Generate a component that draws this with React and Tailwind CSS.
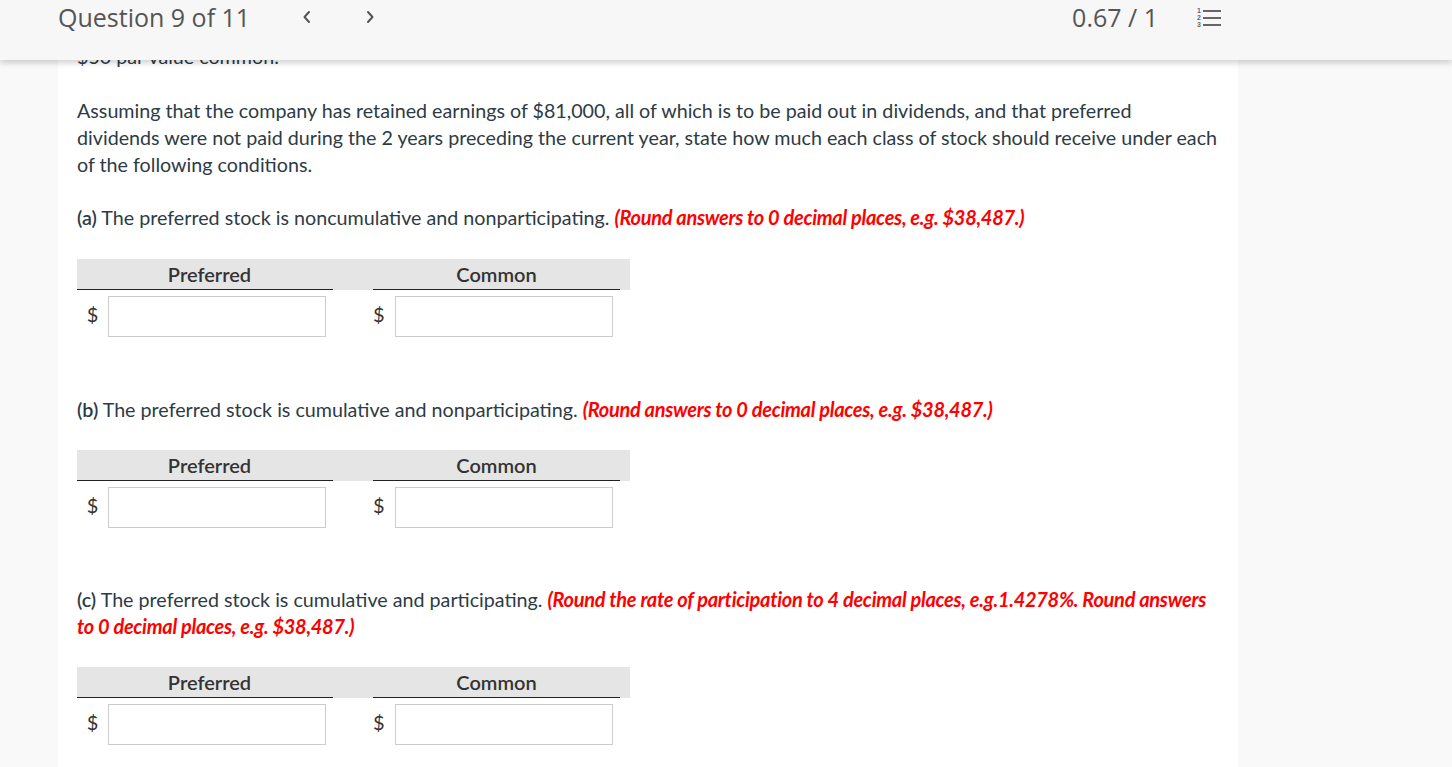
import React from 'react';

const Chevron = ({ dir }) => (
    <svg width="12" height="16" viewBox="0 0 12 16" fill="none">
        <path
            d={dir === 'left' ? 'M8 3 L3.5 8 L8 13' : 'M4 3 L8.5 8 L4 13'}
            stroke="#555"
            strokeWidth="2"
            strokeLinecap="round"
            strokeLinejoin="round"
        />
    </svg>
);

const ListIcon = () => (
    <svg width="26" height="22" viewBox="0 0 26 22">
        <text x="1" y="7" fontSize="7" fontWeight="bold" fill="#666" fontFamily="Liberation Sans, sans-serif">1</text>
        <text x="1" y="14" fontSize="7" fontWeight="bold" fill="#666" fontFamily="Liberation Sans, sans-serif">2</text>
        <text x="1" y="21" fontSize="7" fontWeight="bold" fill="#666" fontFamily="Liberation Sans, sans-serif">3</text>
        <rect x="7" y="4" width="18" height="2" fill="#666" />
        <rect x="7" y="11" width="18" height="2" fill="#666" />
        <rect x="7" y="18" width="18" height="2" fill="#666" />
    </svg>
);

const AnswerTable = () => (
    <div className="w-[553px]">
        <div className="bg-[#e5e5e5] h-[31px] flex">
            <div className="w-[256px] pl-[9px] flex items-center justify-center border-b border-[#222] font-semibold text-[#333] text-[20px]">
                Preferred
            </div>
            <div className="w-[40px]" />
            <div className="w-[247px] flex items-center justify-center border-b border-[#222] font-semibold text-[#333] text-[20px]">
                Common
            </div>
        </div>
        <div className="flex items-center mt-[6px]">
            <span className="w-[31px] mb-[5px] text-center text-[20px] text-[#333]">$</span>
            <input className="w-[218px] h-[41px] border border-[#ccc] bg-white" />
            <div className="w-[47px]" />
            <span className="w-[22px] mb-[5px] text-left text-[20px] text-[#333]">$</span>
            <input className="w-[218px] h-[41px] border border-[#ccc] bg-white" />
        </div>
    </div>
);

const Note = ({ children }) => (
    <span className="text-[#ff0000] text-[20px] font-bold italic tracking-[-0.015em]">{children}</span>
);

export default function App() {
    return (
        <div className="h-[767px] overflow-hidden bg-[#f9f9f9]" style={{ fontFamily: 'Lato, "Open Sans", sans-serif' }}>
            <div className="relative z-10 h-[60px] bg-[#f7f7f7] shadow-[0_3px_6px_rgba(0,0,0,0.18)] flex items-start" style={{ fontFamily: '"Open Sans", sans-serif' }}>
                <div className="pl-[58px] text-[25px] leading-[34px] text-[#555] w-[301px]">Question 9 of 11</div>
                <div className="pt-[9px]"><Chevron dir="left" /></div>
                <div className="pt-[9px] pl-[51px]"><Chevron dir="right" /></div>
                <div className="flex-1" />
                <div className="text-[25px] leading-[34px] text-[#555]">0.67 / 1</div>
                <div className="pt-[6px] pl-[38px] pr-[230px]"><ListIcon /></div>
            </div>
            <div className="ml-[58px] w-[1180px] bg-white -mt-[17px] pl-[19px] pr-[20px] text-[19.7px] text-[#2d3b45] leading-[27px]">
                <p>$50 par value common.</p>
                <p className="mt-[27px]">
                    Assuming that the company has retained earnings of $81,000, all of which is to be paid out in dividends, and that preferred dividends were not paid during the 2 years preceding the current year, state how much each class of stock should receive under each of the following conditions.
                </p>
                <p className="mt-[26px]">
                    <span className="font-semibold">(a)</span> The preferred stock is noncumulative and nonparticipating. <Note>(Round answers to 0 decimal places, e.g. $38,487.)</Note>
                </p>
                <div className="mt-[28px]"><AnswerTable /></div>
                <p className="mt-[59px]">
                    <span className="font-semibold">(b)</span> The preferred stock is cumulative and nonparticipating. <Note>(Round answers to 0 decimal places, e.g. $38,487.)</Note>
                </p>
                <div className="mt-[27px]"><AnswerTable /></div>
                <p className="mt-[58px]">
                    <span className="font-semibold">(c)</span> The preferred stock is cumulative and participating. <Note>(Round the rate of participation to 4 decimal places, e.g.1.4278%. Round answers to 0 decimal places, e.g. $38,487.)</Note>
                </p>
                <div className="mt-[27px] pb-[40px]"><AnswerTable /></div>
            </div>
        </div>
    );
}
